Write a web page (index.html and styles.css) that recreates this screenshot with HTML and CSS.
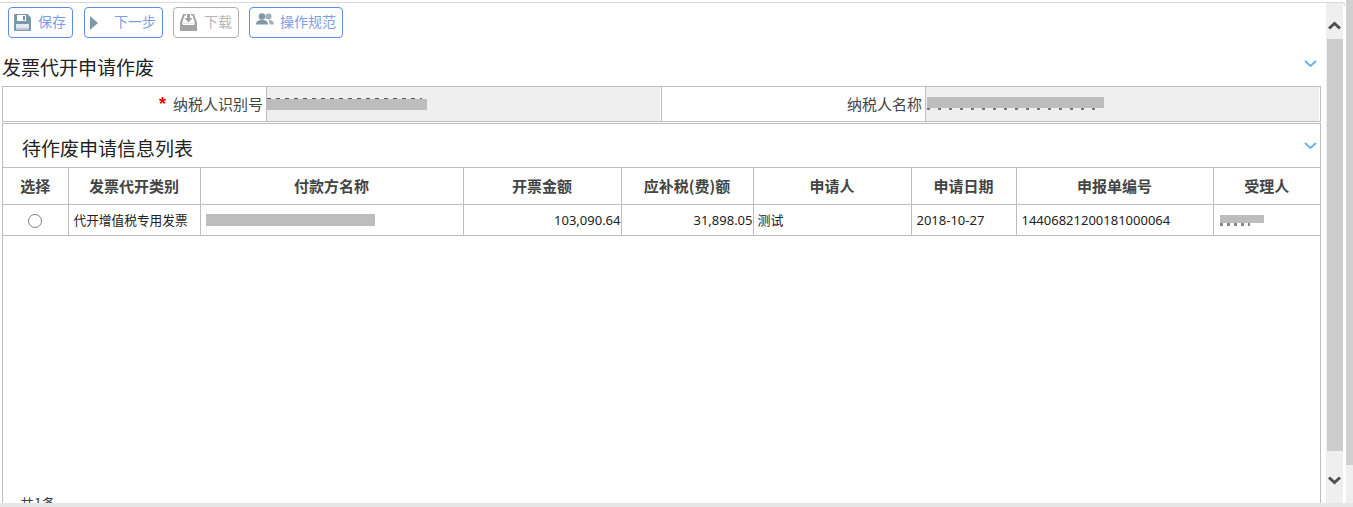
FILE: index.html
```html
<!DOCTYPE html>
<html lang="zh">
<head>
<meta charset="utf-8">
<title>发票代开申请作废</title>
<link rel="stylesheet" href="styles.css">
</head>
<body>
<div class="shell">
  <main class="page">
    <div class="toolbar">
      <button class="btn btn-save">
        <svg class="ico" width="17" height="17" viewBox="0 0 17 17"><path d="M0 1a1 1 0 0 1 1-1h12.500L17 3.500V16a1 1 0 0 1-1 1H1a1 1 0 0 1-1-1z" fill="#7b97aa"/><path d="M3 1h9v6H3z" fill="#fff"/><path d="M9 2h2v4H9z" fill="#6f8da2"/><path d="M2 10h13v6H2z" fill="#e3eaef"/><path d="M2 14h13v2H2z" fill="#b9c8d3"/></svg>
        <span>保存</span>
      </button>
      <button class="btn btn-next">
        <svg class="ico" width="8" height="14" viewBox="0 0 8 14"><path d="M0 0l8 7-8 7z" fill="#7f99a8"/></svg>
        <span>下一步</span>
      </button>
      <button class="btn btn-off">
        <svg class="ico" width="17" height="17" viewBox="0 0 17 17"><path d="M3 0h3v1.500H4.500L2 9.500h13l-2.500-8H11V0h3l3 8.500V17H0V8.500z" fill="#a3a3a3"/><path d="M2 9.500h13L14 11H3z" fill="#fff"/><path d="M7 0h3v4h2.500l-4 4.500-4-4.500H7z" fill="#a3a3a3"/></svg>
        <span>下载</span>
      </button>
      <button class="btn btn-rule">
        <svg class="ico" width="18" height="12" viewBox="0 0 18 12"><circle cx="6" cy="3.500" r="3.300" fill="#7f99a8"/><circle cx="12.500" cy="3.500" r="3" fill="#9db1bd"/><path d="M0 11.500c0-3.500 2.500-4.500 6-4.500s6 1 6 4.500z" fill="#7f99a8"/><path d="M12.500 7c3 0 5.500 1 5.500 4.500h-4.500c0-2-.4-3.500-1-4.500z" fill="#9db1bd"/></svg>
        <span>操作规范</span>
      </button>
    </div>

    <div class="title-row">
      <h2 class="title">发票代开申请作废</h2>
      <svg class="chev" width="13" height="8" viewBox="0 0 13 8"><path d="M1 1l5.500 5L12 1" fill="none" stroke="#6db3ea" stroke-width="2"/></svg>
    </div>

    <div class="form">
      <div class="label label-1"><i class="req">*</i>纳税人识别号</div>
      <div class="field">
        <span class="mask mask-id"></span>
      </div>
      <div class="label label-2">纳税人名称</div>
      <div class="field">
        <span class="mask mask-name"></span>
      </div>
    </div>

    <section class="panel">
      <div class="panel-head">
        <h2 class="title title-list">待作废申请信息列表</h2>
        <svg class="chev" width="13" height="8" viewBox="0 0 13 8"><path d="M1 1l5.500 5L12 1" fill="none" stroke="#6db3ea" stroke-width="2"/></svg>
      </div>
      <table class="grid">
        <colgroup>
          <col class="c1"><col class="c2"><col class="c3"><col class="c4"><col class="c5"><col class="c6"><col class="c7"><col class="c8"><col class="c9">
        </colgroup>
        <thead>
          <tr>
            <th>选择</th><th>发票代开类别</th><th>付款方名称</th><th>开票金额</th><th>应补税(费)额</th><th>申请人</th><th>申请日期</th><th>申报单编号</th><th>受理人</th>
          </tr>
        </thead>
        <tbody>
          <tr>
            <td class="center"><span class="radio"></span></td>
            <td class="type">代开增值税专用发票</td>
            <td class="pad"><span class="mask mask-payer"></span></td>
            <td class="num">103,090.64</td>
            <td class="num num-2">31,898.05</td>
            <td class="tight">测试</td>
            <td class="pad-4">2018-10-27</td>
            <td class="pad-4">14406821200181000064</td>
            <td class="pad-4"><span class="mask mask-agent"></span></td>
          </tr>
        </tbody>
      </table>
      <div class="count">共1条</div>
    </section>
  </main>

  <aside class="scroll">
    <div class="arrow">
      <svg width="13" height="9" viewBox="0 0 13 9"><path d="M1 7.500l5.500-5 5.500 5" fill="none" stroke="#505050" stroke-width="3"/></svg>
    </div>
    <div class="thumb"></div>
    <div class="arrow arrow-down">
      <svg width="13" height="9" viewBox="0 0 13 9"><path d="M1 1.500l5.500 5 5.500-5" fill="none" stroke="#505050" stroke-width="3"/></svg>
    </div>
  </aside>
  <div class="outer-scroll"><div class="outer-track"><div class="outer-thumb"></div></div></div>
  <div class="hbar"></div>
</div>
</body>
</html>
```
FILE: styles.css
```css
* { box-sizing: border-box; }
html, body { margin: 0; padding: 0; height: 507px; overflow: hidden; background: #fff; }
body { font-family: "Noto Sans", "Noto Sans CJK SC", sans-serif; color: #333; }

.shell { position: relative; display: flex; width: 1353px; height: 507px; overflow: hidden; }
.shell::before { content: ""; position: absolute; left: 0; top: 2px; width: 1344px; height: 3px; border-top: 1px solid #d8d8d8; border-right: 1px solid #d8d8d8; border-top-right-radius: 3px; }
.page { width: 1326px; height: 507px; padding: 2px 0 0 2px; overflow: hidden; flex: none; }

.toolbar { display: flex; padding: 5px 0 0 6px; height: 45px; }
.btn { display: flex; align-items: center; height: 31px; border: 1px solid #5f8ae6; border-radius: 4px; background: #fff; font: 14px "Noto Sans CJK SC", sans-serif; color: #7c9ee8; white-space: nowrap; padding: 0; }
.btn span { line-height: 1; margin-bottom: 3px; }
.btn-save { width: 65px; gap: 7px; padding-left: 5px; }
.btn-next { width: 79px; margin-left: 11px; gap: 16px; padding-left: 5px; }
.btn-off { width: 66px; margin-left: 10px; gap: 7px; padding-left: 6px; border-color: #b0b0b0; color: #b5b5b5; }
.btn-rule { width: 94px; margin-left: 10px; gap: 6px; padding-left: 6px; }
.btn-rule .ico { margin-top: -7px; }
.ico { flex: none; }

.title-row { display: flex; justify-content: space-between; align-items: center; height: 39px; padding-right: 9px; }
.title { margin: 0; font: 400 19px/1 "Noto Sans CJK SC", sans-serif; color: #222; }
.title-row .chev { margin-top: -5px; }

.form { display: grid; grid-template-columns: 264px 394px 265px 1fr; width: 1319px; height: 36px; border: 1px solid #bdbdbd; }
.label { display: flex; align-items: center; justify-content: flex-end; padding: 0 3px 2px 0; font: 15px "Noto Sans CJK SC", sans-serif; color: #444; border-right: 1px solid #bdbdbd; }
.label-2 { border-left: 1px solid #bdbdbd; }
.req { margin: 2px 7px 0 0; font: 700 18px/1 "Liberation Sans", sans-serif; color: #f00; }
.field { position: relative; display: flex; align-items: center; background: #efefef; margin-right: 1px; }

.mask { position: relative; display: block; background: #bdbdbd; }
.mask::after { content: ""; position: absolute; left: 0; right: 0; height: 1px; background: repeating-linear-gradient(90deg, #555 0 4px, transparent 4px 9px); }
.mask-id { width: 160px; height: 11px; margin-top: 1px; }
.mask-id::after { top: -1px; right: 5px; }
.mask-name { width: 177px; height: 11px; margin: -3px 0 0 1px; }
.mask-name::after { bottom: -2px; height: 2px; right: 8px; background: repeating-linear-gradient(90deg, #777 0 3px, transparent 3px 11px); }
.mask-payer { width: 169px; height: 12px; }
.mask-payer::after { display: none; }
.mask-agent { width: 44px; height: 8px; margin-left: 1px; margin-top: -3px; }
.mask-agent::after { bottom: -3px; height: 3px; right: 14px; background: repeating-linear-gradient(90deg, #888 0 3px, transparent 3px 7px); }

.panel { display: flex; flex-direction: column; width: 1319px; height: 400px; margin-top: 1px; border: 1px solid #bdbdbd; border-bottom: 0; }
.panel-head { display: flex; justify-content: space-between; align-items: center; height: 43px; padding: 0 3px 0 19px; flex: none; }
.panel-head .chev { margin-top: 1px; }
.title-list { margin-top: 3px; }

.grid { width: 1317px; table-layout: fixed; border-collapse: collapse; font-family: "Noto Sans", "Noto Sans CJK SC", sans-serif; font-size: 13px; flex: none; }
.c1 { width: 65px; } .c2 { width: 132px; } .c3 { width: 263px; } .c4 { width: 158px; } .c5 { width: 132px; } .c6 { width: 158px; } .c7 { width: 105px; } .c8 { width: 197px; } .c9 { width: 107px; }
.grid th, .grid td { border: 1px solid #bdbdbd; padding: 0; white-space: nowrap; overflow: hidden; }
.grid th:first-child, .grid td:first-child { border-left: 0; }
.grid th:last-child, .grid td:last-child { border-right: 0; }
.grid th { height: 37px; padding-bottom: 2px; font: 700 15px "Noto Sans CJK SC", sans-serif; color: #444; text-align: center; }
.grid td { height: 31px; color: #222; }
.center { text-align: center; }
.radio { display: inline-block; width: 14px; height: 14px; border: 1px solid #808080; border-radius: 50%; vertical-align: middle; margin-top: -1px; }
.grid .type { padding: 0 0 2px 5px; font-size: 12.7px; font-family: "Noto Sans CJK SC", sans-serif; }
.grid .pad { padding-left: 5px; }
.num { text-align: right; }
.grid .num-2 { padding-right: 0; }
.grid .tight { padding: 0 0 2px 4px; font-family: "Noto Sans CJK SC", sans-serif; }
.grid .pad-4 { padding-left: 5px; }

.count { margin: 257px 0 0 17px; font: 14px/20px "Noto Sans CJK SC", sans-serif; color: #444; }

.scroll { display: flex; flex-direction: column; width: 17px; height: 501px; margin-top: 3px; background: #efefef; flex: none; }
.arrow { display: flex; align-items: center; justify-content: center; height: 36px; flex: none; padding-top: 9px; }
.thumb { height: 412px; margin-left: 1px; background: #cdcdcd; flex: none; }
.arrow-down { height: 53px; align-items: flex-start; padding-top: 25px; }
.outer-scroll { width: 10px; height: 507px; padding-left: 3px; flex: none; }
.outer-track { width: 7px; height: 507px; background: #efefef; }
.outer-thumb { height: 465px; background: #d0d0d0; }
.hbar { position: absolute; left: 0; bottom: 0; width: 1353px; height: 4px; background: #e6e6e6; }
```
